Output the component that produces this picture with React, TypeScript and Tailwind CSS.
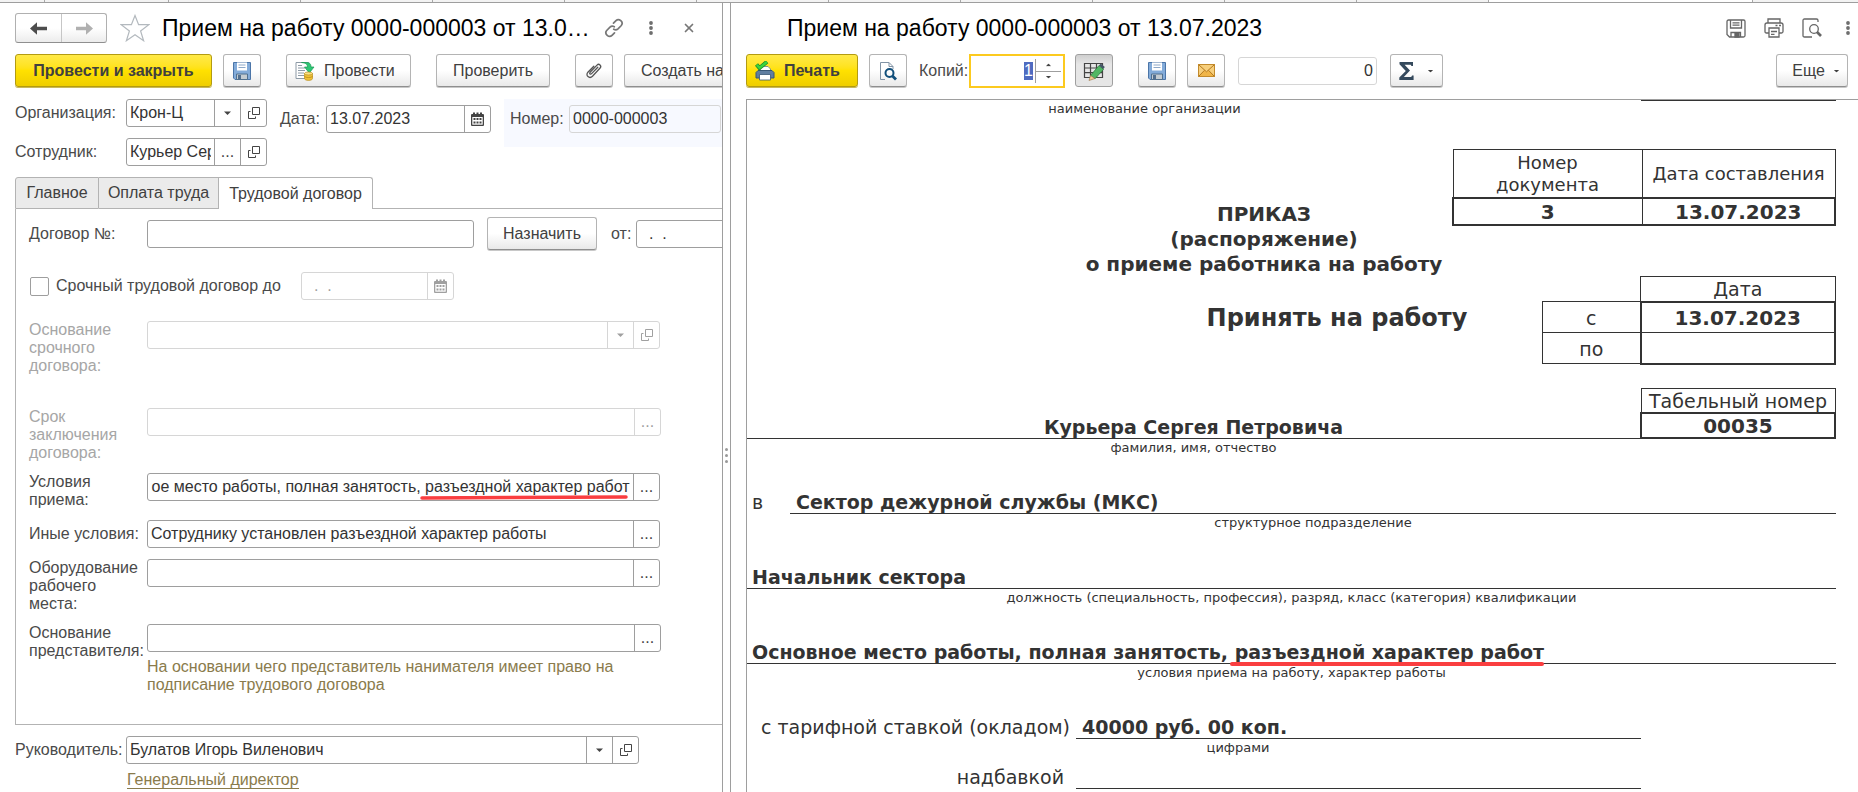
import { useEffect, useRef } from "react";
import type { ReactNode } from "react";
import { X } from "lucide-react";

const buttonBase =
  "flex h-[33px] shrink-0 items-center rounded-[3px] border border-[#b4b4b4] border-b-[#8f8f8f] bg-linear-to-b from-white from-50% to-[#e9e9e9] text-[16px] whitespace-nowrap text-[#404040] shadow-[0_1px_0_#c8c8c8]";
const primaryBase =
  "flex h-[33px] shrink-0 items-center rounded-[3px] border border-[#b39b12] bg-linear-to-b from-[#ffe946] via-[#ffe100] to-[#efce00] text-[16px] font-bold whitespace-nowrap text-[#404040] shadow-[0_1px_0_#c9b95a]";

function Caret({ className = "" }: { className?: string }) {
  return (
    <svg viewBox="0 0 7 4" className={"h-[4px] w-[7px] shrink-0 " + className} fill="currentColor" aria-hidden="true">
      <path d="M0 0.5h7L3.5 4z" />
    </svg>
  );
}

function OpenIcon() {
  return (
    <svg viewBox="0 0 14 14" className="size-[14px]" fill="none" stroke="currentColor" aria-hidden="true">
      <path d="M5.5 1.5h7v7h-7z" />
      <path d="M3.5 5.5h-2v7h7v-2" />
    </svg>
  );
}

function CalendarIcon() {
  return (
    <svg viewBox="0 0 13 14" className="h-[14px] w-[13px]" aria-hidden="true">
      <path d="M1 2h1V.5h2V2h1.5V.5h2V2H9V.5h2V2h1a1 1 0 0 1 1 1v10a1 1 0 0 1-1 1H1a1 1 0 0 1-1-1V3a1 1 0 0 1 1-1z" fill="currentColor" />
      <path d="M1.3 5h10.4v7.7H1.3z" fill="#fff" />
      <path d="M2.5 6h2v2h-2zM5.5 6h2v2h-2zM8.5 6h2v2h-2zM2.5 9.5h2v2h-2zM5.5 9.5h2v2h-2zM8.5 9.5h2v2h-2z" fill="currentColor" />
    </svg>
  );
}

function FloppyIcon() {
  return (
    <svg viewBox="0 0 18 18" className="size-[18px]" aria-hidden="true">
      <path d="M.5.5h17v17H2L.5 16z" fill="#83abd9" stroke="#4b75a8" />
      <path d="M4 .5h10v8H4z" fill="#fff" />
      <path d="M5.5 3h7M5.5 5.5h7" stroke="#8da8c8" />
      <path d="M3.5 12h11v5.5h-11z" fill="#c3cbd1" stroke="#50708f" />
      <path d="M5 13h3v4H5z" fill="#536f8f" />
    </svg>
  );
}

function PostIcon() {
  return (
    <svg viewBox="0 0 20 20" className="size-[20px]" aria-hidden="true">
      <path d="M1 1.5h12.5v16H1z" fill="#fff" stroke="#8d9aa6" />
      <path d="M3 4.5h4M3 7h7M3 9.5h7M3 12h6M3 14.5h6" stroke="#8d9aa6" />
      <path d="M6.5 1.5h5c3.5 0 4.5 1.8 4.5 4.5h3l-4.7 6L9.5 6h3c0-2.5-1.5-4-6-4.5z" fill="#2fc675" stroke="#169a52" strokeWidth=".7" />
      <path d="M9.5 12.5v5c0 2.5 8 2.5 8 0v-5z" fill="#f0c236" stroke="#b98c1c" strokeWidth=".7" />
      <ellipse cx="13.5" cy="12.5" rx="4" ry="1.5" fill="#fbe285" stroke="#b98c1c" strokeWidth=".7" />
      <path d="M9.5 15c0 2 8 2 8 0" fill="none" stroke="#b98c1c" strokeWidth=".8" />
    </svg>
  );
}

function ClipIcon() {
  return (
    <svg viewBox="0 0 18 18" className="size-[18px]" fill="none" stroke="#555" strokeWidth="1.3" strokeLinecap="round" aria-hidden="true">
      <path d="M12.8 5.2 6.6 11.6c-1.2 1.3-2.6 0-1.5-1.3l6.9-7.2c2-2 5 .6 3.1 2.9l-7.6 8.2c-3 3-7.5-.6-4.6-4L8.8 4.2" />
    </svg>
  );
}

function PrintColorIcon() {
  return (
    <svg viewBox="0 0 20 20" className="size-[20px]" aria-hidden="true">
      <path d="M5 5.5h8l2.5 2.5v4H5z" fill="#fff" stroke="#667b91" strokeWidth=".8" />
      <path d="M1 11.5 3 9.5h14l2 2V17H1z" fill="#5f7ea0" stroke="#385775" />
      <path d="M4.5 13.5h11v5.5h-11z" fill="#fff" stroke="#385775" strokeWidth=".8" />
      <path d="m1.5 3.5 3 3.5L12 .8" fill="none" stroke="#1c8b28" strokeWidth="4" />
      <path d="m1.8 3.8 2.8 3L11.8 1" fill="none" stroke="#3bd43e" strokeWidth="2.5" />
    </svg>
  );
}

function PreviewIcon() {
  return (
    <svg viewBox="0 0 18 20" className="h-[20px] w-[18px]" fill="none" aria-hidden="true">
      <path d="M6 18.5H1.5v-17H10l4 4V8" stroke="#8193a5" />
      <path d="M10 1.5v4h4" stroke="#8193a5" />
      <circle cx="10.5" cy="12" r="4" stroke="#114f7b" strokeWidth="2" />
      <path d="m13.5 15 3.5 3.5" stroke="#114f7b" strokeWidth="2.8" />
    </svg>
  );
}

function EditTableIcon() {
  return (
    <svg viewBox="0 0 22 20" className="h-[20px] w-[22px]" fill="none" aria-hidden="true">
      <path d="M1.5 2.5h18v14h-18zM1.5 7h18M1.5 11.7h18M7.5 2.5v14M13.5 2.5v14" stroke="#444" strokeWidth="1.2" />
      <path d="m7.5 14.5 8.5-10 4.5 3.8-8.5 9.5z" fill="#51b764" stroke="#2f7d3f" strokeWidth=".8" />
      <path d="m16 4.5 1.8-2 4 3.4-1.5 2.1z" fill="#445566" />
      <path d="M7.5 14.5 6 19.5l6-2z" fill="#efc896" stroke="#9b7345" strokeWidth=".6" />
    </svg>
  );
}

function MailIcon() {
  return (
    <svg viewBox="0 0 17 13" className="h-[13px] w-[17px] shrink-0" fill="none" aria-hidden="true">
      <rect x=".5" y=".5" width="16" height="12" fill="#f7cf7c" stroke="#c28a2c" />
      <path d="M1 12 6.5 6.5 8.5 8l2-1.5L16 12z" fill="#f0b548" />
      <path d="M1 1 8.5 7.8 16 1" stroke="#b5781c" />
      <path d="M1 12 6.5 6.3M16 12 10.5 6.3" stroke="#b5781c" />
    </svg>
  );
}

function SigmaIcon() {
  return (
    <svg viewBox="0 0 15 18" className="h-[18px] w-[15px]" fill="#34495c" aria-hidden="true">
      <path d="M.5 0H14v4h-1.5l-.8-1.2H5.6L11 8.6 4.8 15h7.4l.9-1.5h1.5V18H.3v-2.4l6.5-6.7L.5 2.2z" />
    </svg>
  );
}

function Dots() {
  return (
    <svg viewBox="0 0 4 14" className="h-[14px] w-[4px]" fill="#6e6e6e" aria-hidden="true">
      <circle cx="2" cy="2" r="1.9" />
      <circle cx="2" cy="7" r="1.9" />
      <circle cx="2" cy="12" r="1.9" />
    </svg>
  );
}

function FieldBox({
  id,
  value,
  className,
  disabled = false,
  actions = [],
  scrollEnd = false,
  children,
}: {
  id: string;
  value: string;
  className: string;
  disabled?: boolean;
  actions?: { name: string; icon: ReactNode }[];
  scrollEnd?: boolean;
  children?: ReactNode;
}) {
  const ref = useRef<HTMLInputElement>(null);
  useEffect(() => {
    if (scrollEnd && ref.current) ref.current.scrollLeft = ref.current.scrollWidth;
  }, [scrollEnd]);
  const tone = disabled ? "border-[#d6d6d6]" : "border-[#9e9e9e]";
  return (
    <div className={"relative flex h-[28px] shrink-0 rounded-[3px] border bg-white " + tone + " " + className}>
      <input
        ref={ref}
        id={id}
        defaultValue={value}
        disabled={disabled}
        className={"min-w-0 flex-1 bg-transparent px-[3px] text-[16px] outline-none " + (disabled ? "text-[#a0a0a0]" : "text-[#333]")}
      />
      {actions.map((a) => (
        <button
          key={a.name}
          type="button"
          aria-label={a.name}
          disabled={disabled}
          className={"flex w-[26px] shrink-0 items-center justify-center border-l text-[16px] " + tone + (disabled ? " text-[#a0a0a0]" : " text-[#444]")}
        >
          {a.icon}
        </button>
      ))}
      {children}
    </div>
  );
}

const drop = { name: "Выбрать", icon: <Caret /> };
const open = { name: "Открыть", icon: <OpenIcon /> };
const more = { name: "Показать все", icon: "..." };
const calendar = { name: "Календарь", icon: <CalendarIcon /> };

function FormRow({
  id,
  label,
  disabled = false,
  className = "mt-[11px] items-start",
  children,
}: {
  id: string;
  label: string;
  disabled?: boolean;
  className?: string;
  children: ReactNode;
}) {
  return (
    <div className={"flex " + className}>
      <label htmlFor={id} className={"w-[118px] shrink-0 leading-[18px] whitespace-pre-line " + (disabled ? "text-[#a6a6a6]" : "text-[#4a4a4a]")}>
        {label}
      </label>
      {children}
    </div>
  );
}

function DocumentForm() {
  return (
    <section className="min-w-0 overflow-hidden pt-[10px] pl-[15px] text-[16px] leading-[18px] text-[#4a4a4a]">
      <header className="flex h-[30px] items-center">
        <div className="flex h-[30px] shrink-0 rounded-[3px] border border-[#b0b0b0] border-b-[#8f8f8f] bg-linear-to-b from-white from-50% to-[#ececec]">
          <button type="button" aria-label="Назад" className="flex w-[46px] items-center justify-center border-r border-[#c6c6c6]">
            <svg viewBox="0 0 17 13" className="h-[13px] w-[17px]" fill="#4d4d4d" aria-hidden="true">
              <path d="M0 6.5 7 .3v4.5h10v3.4H7v4.5z" />
            </svg>
          </button>
          <button type="button" aria-label="Вперед" className="flex w-[44px] items-center justify-center">
            <svg viewBox="0 0 17 13" className="h-[13px] w-[17px]" fill="#b0b0b0" aria-hidden="true">
              <path d="M17 6.5 10 .3v4.5H0v3.4h10v4.5z" />
            </svg>
          </button>
        </div>
        <button type="button" aria-label="В избранное" className="ml-[13px] shrink-0">
          <svg viewBox="0 0 30 28" className="h-[28px] w-[30px]" fill="#fff" stroke="#b3b9be" strokeWidth="1.2" aria-hidden="true">
            <path d="m15 1.5 3.6 9.2h10.2l-8.2 6.2 3 9.8-8.6-6-8.6 6 3-9.8-8.2-6.2h10.2z" />
          </svg>
        </button>
        <h1 className="ml-[12px] w-[429px] shrink-0 text-[23px] leading-[30px] whitespace-nowrap text-black">Прием на работу 0000-000003 от 13.0…</h1>
        <button type="button" aria-label="Ссылка" className="ml-[13px] shrink-0">
          <svg viewBox="0 0 20 20" className="size-[20px]" fill="none" stroke="#777" strokeWidth="1.7" strokeLinecap="round" aria-hidden="true">
            <path d="M9.5 5.2 12 2.7c3-3 8 1.5 5.3 4.8L14 10.8c-1.3 1.2-3 1.2-4.3.4M10.5 14.8 8 17.3c-3 3-8-1.5-5.3-4.8L6 9.2c1.3-1.2 3-1.2 4.3-.4" />
          </svg>
        </button>
        <button type="button" aria-label="Дополнительно" className="ml-[25px] shrink-0">
          <Dots />
        </button>
        <button type="button" aria-label="Закрыть" className="ml-[29px] shrink-0">
          <X className="size-[14px] text-[#777]" strokeWidth={3} />
        </button>
      </header>

      <div className="mt-[11px] flex">
        <button type="button" className={primaryBase + " w-[197px] justify-center"}>Провести и закрыть</button>
        <button type="button" aria-label="Записать" className={buttonBase + " ml-[11px] w-[38px] justify-center"}>
          <FloppyIcon />
        </button>
        <button type="button" className={buttonBase + " ml-[25px] w-[125px] gap-[9px] pl-[8px]"}>
          <PostIcon />
          Провести
        </button>
        <button type="button" className={buttonBase + " ml-[25px] w-[114px] justify-center"}>Проверить</button>
        <button type="button" aria-label="Файлы" className={buttonBase + " ml-[25px] w-[38px] justify-center"}>
          <ClipIcon />
        </button>
        <button type="button" className={buttonBase + " ml-[11px] w-[190px] pl-[16px]"}>Создать на</button>
      </div>

      <div className="mt-[12px] flex items-start">
        <div className="flex shrink-0 flex-col gap-[11px]">
          <div className="flex items-center">
            <label htmlFor="org" className="w-[111px]">Организация:</label>
            <FieldBox id="org" value="Крон-Ц" className="w-[141px]" actions={[drop, open]} />
          </div>
          <div className="flex items-center">
            <label htmlFor="employee" className="w-[111px]">Сотрудник:</label>
            <FieldBox id="employee" value="Курьер Сергей Петрович" className="w-[141px]" actions={[more, open]} />
          </div>
        </div>
        <div className="mt-[6px] ml-[13px] flex shrink-0 items-center">
          <label htmlFor="date" className="w-[46px]">Дата:</label>
          <FieldBox id="date" value="13.07.2023" className="w-[165px]" actions={[calendar]} />
        </div>
        <div className="ml-[13px] flex h-[48px] flex-1 items-start bg-[#f7f9ff] py-[6px] pl-[6px]">
          <label htmlFor="number" className="w-[59px] shrink-0 leading-[28px]">Номер:</label>
          <input
            id="number"
            readOnly
            defaultValue="0000-000003"
            className="h-[28px] w-[152px] shrink-0 rounded-[3px] border border-[#d6d6d6] bg-transparent px-[3px] text-[#333] outline-none"
          />
        </div>
      </div>

      <div role="tablist" className="mt-[11px] flex h-[32px] text-[#404040]">
        <button type="button" role="tab" className="w-[84px] rounded-tl-[3px] border border-[#b3b3b3] bg-[#ebebeb]">Главное</button>
        <button type="button" role="tab" className="w-[119px] border-y border-[#b3b3b3] bg-[#ebebeb]">Оплата труда</button>
        <button type="button" role="tab" aria-selected="true" className="w-[155px] rounded-tr-[3px] border border-b-0 border-[#b3b3b3] bg-white">Трудовой договор</button>
        <div className="flex-1 border-b border-[#b3b3b3]" />
      </div>

      <div className="border-b border-l border-[#b3b3b3] pt-[8px] pb-[30px] pl-[13px]">
        <div className="flex items-center">
          <label htmlFor="contract" className="w-[118px] shrink-0">Договор №:</label>
          <FieldBox id="contract" value="" className="w-[327px]" />
          <button type="button" className={buttonBase + " ml-[13px] w-[110px] justify-center"}>Назначить</button>
          <label htmlFor="from" className="ml-[14px] w-[25px] shrink-0">от:</label>
          <FieldBox id="from" value="  .  ." className="w-[153px]" actions={[calendar]} />
        </div>
        <div className="mt-[22px] flex items-center">
          <input id="fixed" type="checkbox" className="ml-px size-[19px] shrink-0 appearance-none rounded-[2px] border border-[#9e9e9e] bg-white" />
          <label htmlFor="fixed" className="ml-[7px] w-[245px] shrink-0">Срочный трудовой договор до</label>
          <FieldBox id="until" value="  .  ." className="w-[153px]" disabled actions={[calendar]} />
        </div>
        <FormRow id="basis" label={"Основание\nсрочного\nдоговора:"} disabled className="mt-[21px] items-start">
          <FieldBox id="basis" value="" className="w-[513px]" disabled actions={[drop, open]} />
        </FormRow>
        <FormRow id="term" label={"Срок\nзаключения\nдоговора:"} disabled className="mt-[33px] items-start">
          <FieldBox id="term" value="" className="w-[514px]" disabled actions={[more]} />
        </FormRow>
        <FormRow id="conditions" label={"Условия\nприема:"}>
          <FieldBox id="conditions" value="Основное место работы, полная занятость, разъездной характер работ" className="w-[513px]" actions={[more]} scrollEnd>
            <svg viewBox="0 0 208 5" preserveAspectRatio="none" className="pointer-events-none absolute right-[31px] bottom-0 h-[5px] w-[208px]" aria-hidden="true">
              <path d="M2 3 206 2" stroke="#fa3e40" strokeWidth="3.5" strokeLinecap="round" />
            </svg>
          </FieldBox>
        </FormRow>
        <FormRow id="other" label="Иные условия:" className="mt-[11px] items-center">
          <FieldBox id="other" value="Сотруднику установлен разъездной характер работы" className="w-[513px]" actions={[more]} />
        </FormRow>
        <FormRow id="equipment" label={"Оборудование\nрабочего\nместа:"}>
          <FieldBox id="equipment" value="" className="w-[513px]" actions={[more]} />
        </FormRow>
        <FormRow id="agent" label={"Основание\nпредставителя:"}>
          <div className="shrink-0">
            <FieldBox id="agent" value="" className="w-[514px]" actions={[more]} />
            <p className="mt-[6px] w-[480px] text-[#8a7b4c]">На основании чего представитель нанимателя имеет право на подписание трудового договора</p>
          </div>
        </FormRow>
      </div>

      <div className="mt-[11px] flex items-center">
        <label htmlFor="manager" className="w-[111px] shrink-0">Руководитель:</label>
        <FieldBox id="manager" value="Булатов Игорь Виленович" className="w-[513px]" actions={[drop, open]} />
      </div>
      <a href="#position" className="mt-[7px] ml-[112px] inline-block border-b border-[#8a7b4c] leading-[17px] text-[#8a7b4c]">
        Генеральный директор
      </a>
    </section>
  );
}

function Caption({ children, className = "" }: { children: ReactNode; className?: string }) {
  return <p className={"h-[18px] text-center text-[13px] leading-[18px] " + className}>{children}</p>;
}

function PrintedOrder() {
  return (
    <div className="ml-[15px] flex-1 overflow-hidden border-t border-l border-[#9e9e9e] pr-[22px] font-['DejaVu_Sans',Verdana,sans-serif] text-[19px] leading-[30px] text-[#333]">
      <div className="flex h-[49px]">
        <Caption className="flex-1">наименование организации</Caption>
        <div className="flex w-[294px] justify-end">
          <div className="h-px w-[195px] bg-[#333]" />
        </div>
      </div>
      <div className="flex h-[127px] items-start justify-end">
        <h2 className="mt-[53px] w-[376px] text-center text-[20px] leading-[25px] font-bold">
          ПРИКАЗ
          <br />
          (распоряжение)
          <br />
          о приеме работника на работу
        </h2>
        <table className="w-[384px] table-fixed border-collapse text-center leading-[22px]">
          <thead>
            <tr className="h-[48px] text-[18px]">
              <th className="w-[189px] border border-[#333] p-0 pt-[2px] font-normal">
                Номер
                <br />
                документа
              </th>
              <th className="border border-[#333] p-0 pt-[2px] font-normal">Дата составления</th>
            </tr>
          </thead>
          <tbody>
            <tr className="h-[27px] text-[20px] font-bold">
              <td className="border-2 border-r border-[#333] p-0 pt-px">3</td>
              <td className="border-2 border-l border-[#333] p-0 pt-px">13.07.2023</td>
            </tr>
          </tbody>
        </table>
      </div>
      <div className="flex h-[112px] items-start justify-end">
        <h3 className="mt-[26px] w-[410px] text-center text-[24px] leading-[32px] font-bold">Принять на работу</h3>
        <table className="w-[294px] table-fixed border-collapse text-center leading-[22px]">
          <tbody>
            <tr className="h-[25px]">
              <td className="w-[98px] p-0" />
              <th className="border border-[#333] p-0 pt-px font-normal">Дата</th>
            </tr>
            <tr className="h-[31px]">
              <th className="border border-[#333] p-0 pt-[2px] font-normal">с</th>
              <td className="border-2 border-b border-[#333] p-0 pt-[2px] text-[20px] font-bold">13.07.2023</td>
            </tr>
            <tr className="h-[31px]">
              <th className="border border-[#333] p-0 pt-[2px] font-normal">по</th>
              <td className="border-2 border-t border-[#333] p-0" />
            </tr>
          </tbody>
        </table>
      </div>
      <div className="flex h-[51px] items-end">
        <p className="h-[27px] flex-1 border-b border-[#333] text-center font-bold">Курьера Сергея Петровича</p>
        <table className="w-[196px] table-fixed border-collapse text-center leading-[22px]">
          <tbody>
            <tr className="h-[25px]">
              <th className="border border-[#333] p-0 pt-px font-normal">Табельный номер</th>
            </tr>
            <tr className="h-[25px]">
              <td className="border-2 border-[#333] p-0 text-[20px] font-bold">00035</td>
            </tr>
          </tbody>
        </table>
      </div>
      <Caption className="mr-[196px]">фамилия, имя, отчество</Caption>
      <div className="mt-[30px] flex">
        <span className="h-[27px] w-[43px] pl-[5px]">в</span>
        <div className="flex-1">
          <p className="h-[27px] border-b border-[#333] pl-[6px] font-bold">Сектор дежурной службы (МКС)</p>
          <Caption>структурное подразделение</Caption>
        </div>
      </div>
      <p className="mt-[30px] h-[27px] border-b border-[#333] pl-[5px] font-bold">Начальник сектора</p>
      <Caption>должность (специальность, профессия), разряд, класс (категория) квалификации</Caption>
      <p className="mt-[30px] h-[27px] border-b border-[#333] pl-[5px] font-bold whitespace-nowrap">
        Основное место работы, полная занятость,{" "}
        <span className="relative inline-block">
          разъездной характер работ
          <span className="absolute right-0 bottom-px -left-[5px] h-[4px] rounded-full bg-[#fa3e40]" />
        </span>
      </p>
      <Caption>условия приема на работу, характер работы</Caption>
      <div className="mt-[30px] mr-[195px] flex">
        <span className="h-[27px] w-[329px] pr-[6px] text-right whitespace-nowrap">с тарифной ставкой (окладом)</span>
        <div className="flex-1">
          <p className="h-[27px] border-b border-[#333] pl-[6px] font-bold">40000 руб. 00 коп.</p>
          <Caption className="w-[324px]">цифрами</Caption>
        </div>
      </div>
      <div className="mt-[5px] mr-[195px] flex">
        <span className="h-[27px] w-[329px] pr-[12px] text-right">надбавкой</span>
        <p className="h-[27px] flex-1 border-b border-[#333]" />
      </div>
    </div>
  );
}

function PrintPreview() {
  const copies = useRef<HTMLInputElement>(null);
  useEffect(() => {
    copies.current?.focus({ preventScroll: true });
    copies.current?.select();
  }, []);
  return (
    <section className="flex min-w-0 flex-col overflow-hidden pt-[10px] text-[16px] leading-[18px] text-[#4a4a4a]">
      <header className="flex h-[30px] items-center pr-[8px] pl-[56px]">
        <h2 className="flex-1 text-[23px] leading-[30px] whitespace-nowrap text-black">Прием на работу 0000-000003 от 13.07.2023</h2>
        <button type="button" aria-label="Сохранить">
          <svg viewBox="0 0 20 19" className="h-[19px] w-[20px]" fill="none" stroke="#666" strokeWidth="1.3" aria-hidden="true">
            <path d="M1 2.5A1.5 1.5 0 0 1 2.5 1h15A1.5 1.5 0 0 1 19 2.5v14a1.5 1.5 0 0 1-1.5 1.5h-14L1 15.5z" />
            <path d="M4.5 1v8h11V1M6.5 3.8h7M6.5 6.2h7M5 18v-4.5h9.5V18" />
            <path d="M9 14h4v4H9z" fill="#666" />
          </svg>
        </button>
        <button type="button" aria-label="Напечатать" className="ml-[18px]">
          <svg viewBox="0 0 20 20" className="size-[20px]" fill="none" stroke="#666" strokeWidth="1.3" aria-hidden="true">
            <path d="M4 5V1h12v4M5 15H2.5C1.5 15 1 14.5 1 13.5V7c0-1 1-2 2-2h14c1 0 2 1 2 2v6.5c0 1-.5 1.5-1.5 1.5H15" />
            <path d="M5 10h10v9H5zM7 13.5h6M7 16.3h3.5M11.5 7.5h2M15 7.5h2" />
          </svg>
        </button>
        <button type="button" aria-label="Просмотр" className="ml-[18px]">
          <svg viewBox="0 0 20 20" className="size-[20px]" fill="none" stroke="#666" strokeWidth="1.3" aria-hidden="true">
            <path d="M10 19H2.5C1.5 19 1 18.5 1 17.5v-15C1 1.5 1.5 1 2.5 1h12c1 0 1.5.5 1.5 1.5V4" />
            <circle cx="12" cy="11" r="4.3" />
            <path d="m15 14 4 4" strokeWidth="2.6" />
          </svg>
        </button>
        <button type="button" aria-label="Дополнительно" className="ml-[24px]">
          <Dots />
        </button>
      </header>

      <div className="mt-[11px] flex h-[34px] items-start pr-[10px] pl-[15px]">
        <button type="button" className={primaryBase + " w-[112px] gap-[9px] pl-[8px]"}>
          <PrintColorIcon />
          Печать
        </button>
        <button type="button" aria-label="Предварительный просмотр" className={buttonBase + " ml-[11px] w-[38px] justify-center"}>
          <PreviewIcon />
        </button>
        <label htmlFor="copies" className="ml-[12px] w-[50px] leading-[34px]">Копий:</label>
        <div className="flex h-[34px] w-[96px] shrink-0 border-2 border-[#fcca1f] bg-white py-[3px] pr-[2px]">
          <input
            ref={copies}
            id="copies"
            inputMode="numeric"
            defaultValue="1"
            className="min-w-0 flex-1 pr-[2px] text-right text-[16px] outline-none selection:bg-[#4f6bc0] selection:text-white"
          />
          <div className="flex w-[26px] flex-col border-l border-[#9e9e9e] text-[#444]">
            <button type="button" aria-label="Больше" className="flex flex-1 items-center justify-center border-b border-[#9e9e9e]">
              <Caret className="rotate-180 scale-75" />
            </button>
            <button type="button" aria-label="Меньше" className="flex flex-1 items-center justify-center">
              <Caret className="scale-75" />
            </button>
          </div>
        </div>
        <button
          type="button"
          aria-label="Редактирование"
          aria-pressed="true"
          className="ml-[10px] flex h-[33px] w-[38px] shrink-0 items-center justify-center rounded-[3px] border border-[#a0a0a0] bg-linear-to-b from-[#cfcfcf] to-[#e6e6e6] to-30%"
        >
          <EditTableIcon />
        </button>
        <button type="button" aria-label="Сохранить файл" className={buttonBase + " ml-[25px] w-[38px] justify-center"}>
          <FloppyIcon />
        </button>
        <button type="button" aria-label="Отправить" className={buttonBase + " ml-[11px] w-[38px] justify-center"}>
          <MailIcon />
        </button>
        <input
          aria-label="Сумма"
          readOnly
          defaultValue="0"
          className="mt-[3px] ml-[13px] h-[28px] w-[139px] shrink-0 rounded-[3px] border border-[#d6d6d6] px-[3px] text-right text-[#333] outline-none"
        />
        <button type="button" aria-label="Итоги" className={buttonBase + " ml-[13px] w-[53px] justify-center gap-[13px]"}>
          <SigmaIcon />
          <Caret className="scale-75" />
        </button>
        <button type="button" className={buttonBase + " ml-auto w-[72px] justify-center gap-[8px] pl-[8px]"}>
          Еще
          <Caret className="scale-75" />
        </button>
      </div>

      <div className="h-[11px] shrink-0" />
      <PrintedOrder />
    </section>
  );
}

export default function App() {
  return (
    <main className="flex h-screen flex-col overflow-hidden bg-white font-['Liberation_Sans',Arial,sans-serif]">
      <div className="flex h-[3px] shrink-0 border-b border-[#9e9e9e] bg-[#f3f3f3]">
        <div className="w-[45px] border-r border-[#a8a8a8]" />
        <div className="w-[124px] border-r border-[#a8a8a8]" />
        {Array.from({ length: 10 }, (_, i) => (
          <div key={i} className="w-[132px] border-r border-[#a8a8a8]" />
        ))}
        <div className="w-[264px] border-r border-[#a8a8a8] bg-white" />
      </div>
      <div className="grid min-h-0 flex-1 grid-cols-[722fr_9px_1127fr]">
        <DocumentForm />
        <div className="flex flex-col items-center justify-center gap-[3px] border-x border-[#9e9e9e] pt-[115px]">
          <i className="size-[3px] rounded-full bg-[#999]" />
          <i className="size-[3px] rounded-full bg-[#999]" />
          <i className="size-[3px] rounded-full bg-[#999]" />
        </div>
        <PrintPreview />
      </div>
    </main>
  );
}
